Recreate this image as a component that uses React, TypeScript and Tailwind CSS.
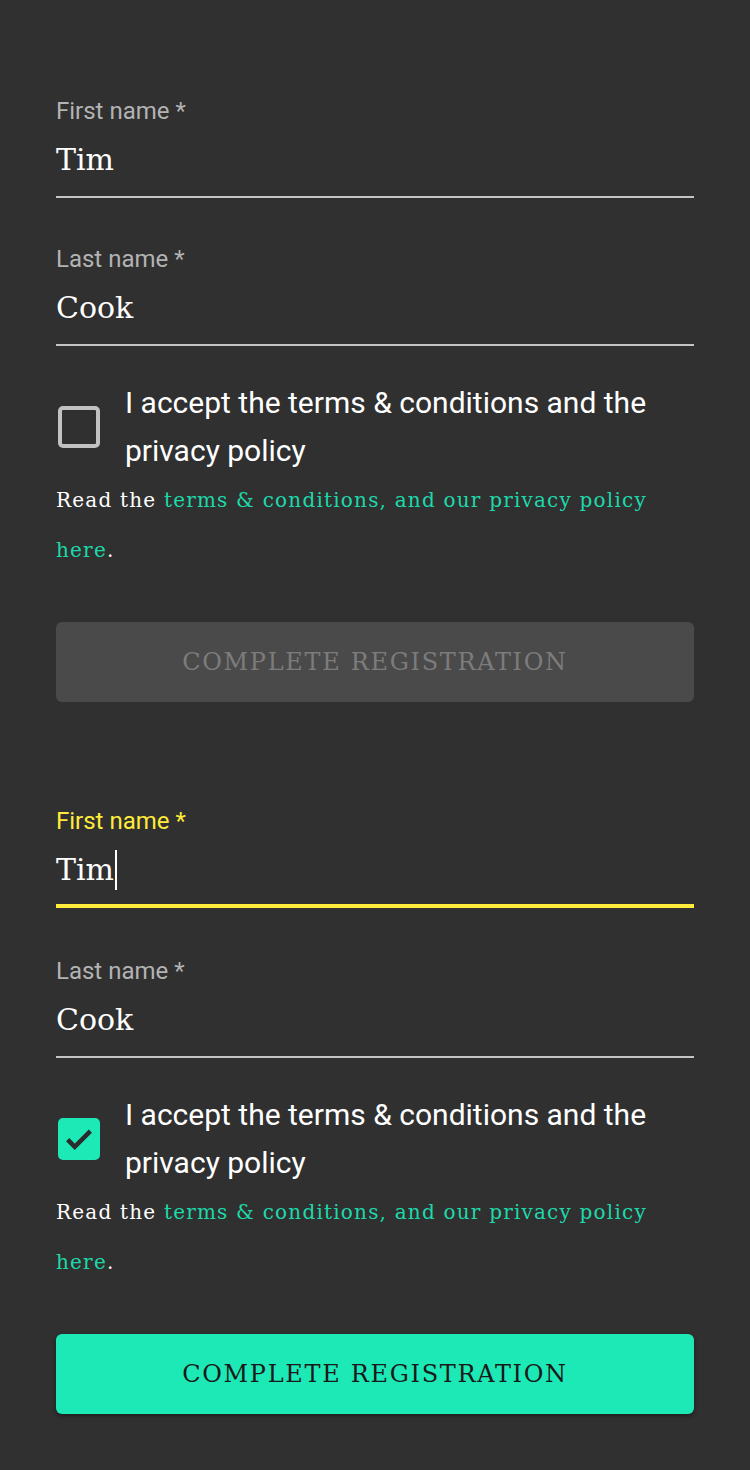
import { useState } from "react";

const sans = "font-['Roboto','Open_Sans',sans-serif]";
const slab = "font-['DejaVu_Serif',serif]";

function Field({ label, value, focused }: { label: string; value: string; focused?: boolean }) {
  return (
    <div className="flex flex-col">
      <span className={`${sans} text-[24px] leading-[30px] ${focused ? "text-[#ffeb3b]" : "text-[#b3b3b3]"}`}>{label}</span>
      <div
        className={`mt-[14px] flex items-center ${
          focused ? "border-b-4 border-[#ffeb3b] pb-[14px]" : "border-b-2 border-[#c4c4c4] pb-[16px]"
        }`}
      >
        <span className={`${slab} text-[30px] leading-[40px] text-white`}>{value}</span>
        {focused && <span className="ml-[1px] h-[40px] w-[2px] bg-white" />}
      </div>
    </div>
  );
}

function Form({ active }: { active?: boolean }) {
  const [checked, setChecked] = useState(!!active);

  return (
    <div className="flex flex-col">
      <Field label="First name *" value="Tim" focused={active} />
      <div className={active ? "mt-[48px]" : "mt-[46px]"}>
        <Field label="Last name *" value="Cook" />
      </div>

      <label className="mt-[33px] flex items-center gap-[25px]">
        <button
          onClick={() => setChecked((c) => !c)}
          className={`ml-[2px] flex h-[42px] w-[42px] shrink-0 items-center justify-center rounded-[5px] ${
            checked ? "bg-[#1de9b6]" : "border-4 border-[#c2c2c2]"
          }`}
        >
          {checked && (
            <svg viewBox="0 0 24 24" className="h-[34px] w-[34px]">
              <path d="M4 12.5l5 5L20 6.5" fill="none" stroke="#2b2b2b" strokeWidth="3.2" />
            </svg>
          )}
        </button>
        <span className={`${sans} text-[30px] leading-[48px] text-white`}>
          I accept the terms &amp; conditions and the privacy policy
        </span>
      </label>

      <p className={`${slab} pr-[30px] text-[20px] leading-[50px] tracking-[0.06em] text-white`}>
        Read the <span className="text-[#1dd9aa]">terms &amp; conditions, and our privacy policy here</span>.
      </p>

      <button
        disabled={!checked}
        className={`${slab} mt-[47px] h-[80px] w-full rounded-[6px] text-[24px] tracking-[0.07em] ${
          checked ? "bg-[#1de9b6] text-[#1a1a1a] shadow-[0_2px_4px_rgba(0,0,0,0.4)]" : "bg-[#4a4a4a] text-[#7c7c7c]"
        }`}
      >
        COMPLETE REGISTRATION
      </button>
    </div>
  );
}

export default function App() {
  return (
    <div className="min-h-[1470px] bg-[#303030] px-[56px] pt-[96px]">
      <Form />
      <div className="mt-[104px]">
        <Form active />
      </div>
    </div>
  );
}
